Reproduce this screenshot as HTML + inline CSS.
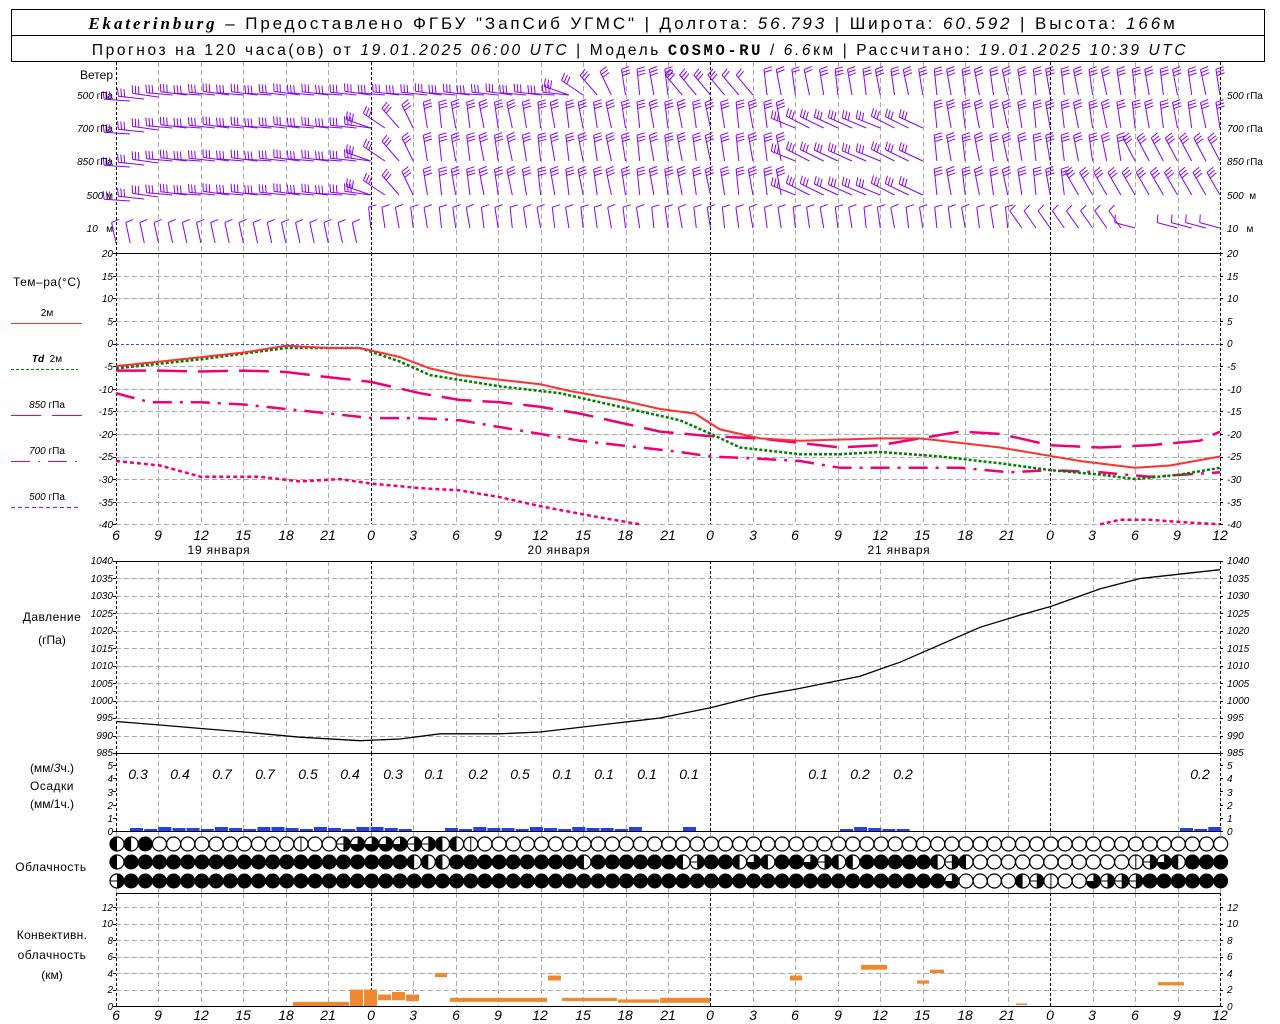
<!DOCTYPE html>
<html><head><meta charset="utf-8"><style>
html,body{margin:0;padding:0;background:#fff;width:1280px;height:1024px;overflow:hidden}
svg{display:block}
text{font-family:"Liberation Sans",sans-serif;fill:#000}
.it{font-style:italic}
.ax{font-family:"Liberation Sans",sans-serif;font-style:italic;font-size:10px}
.hl{font-family:"Liberation Sans",sans-serif;font-style:italic;font-size:14px}
.lb{font-size:12px}
</style></head><body>
<svg id="s" width="1280" height="1024" viewBox="0 0 1280 1024" xmlns="http://www.w3.org/2000/svg">
<rect x="11.5" y="9.5" width="1253" height="52" fill="none" stroke="#000"/>
<line x1="11" y1="35.5" x2="1265" y2="35.5" stroke="#000"/>
<text x="633" y="29" text-anchor="middle" font-size="17" letter-spacing="2.9"><tspan font-family="Liberation Serif" font-style="italic" font-weight="bold">Ekaterinburg</tspan> – Предоставлено ФГБУ "ЗапСиб УГМС" | Долгота: <tspan class="it">56.793</tspan> | Широта: <tspan class="it">60.592</tspan> | Высота: <tspan class="it">166</tspan>м</text>
<text x="640" y="55" text-anchor="middle" font-size="15.5" letter-spacing="2.6">Прогноз на 120 часа(ов) от <tspan class="it">19.01.2025 06:00 UTC</tspan> | Модель <tspan font-family="Liberation Mono" font-weight="bold">COSMO-RU</tspan> / <tspan class="it">6.6</tspan>км | Рассчитано: <tspan class="it">19.01.2025 10:39 UTC</tspan></text>
<g id="grid"></g>
<g id="wind" stroke="#8800ff" stroke-width="1" fill="none"></g>
<g id="curves" fill="none"></g>
<g id="bars"></g>
<g id="clouds"></g>
<g class="lb" text-anchor="end">
<text x="113" y="79">Ветер</text>
<text x="113" y="99" font-size="10"><tspan class="it">500</tspan> гПа</text>
<text x="113" y="132" font-size="10"><tspan class="it">700</tspan> гПа</text>
<text x="113" y="165" font-size="10"><tspan class="it">850</tspan> гПа</text>
<text x="113" y="199" font-size="10"><tspan class="it">500</tspan> м</text>
<text x="113" y="232" font-size="10"><tspan class="it">10</tspan> &#160;&#160;м</text>
</g>
<g class="lb">
<text x="1227" y="99" font-size="10"><tspan class="it">500</tspan> гПа</text>
<text x="1227" y="132" font-size="10"><tspan class="it">700</tspan> гПа</text>
<text x="1227" y="165" font-size="10"><tspan class="it">850</tspan> гПа</text>
<text x="1227" y="199" font-size="10"><tspan class="it">500</tspan> &#160;м</text>
<text x="1227" y="232" font-size="10"><tspan class="it">10</tspan> &#160;&#160;м</text>
</g>
<g class="lb" text-anchor="middle">
<text x="47" y="286" letter-spacing="0.5">Тем–ра(°C)</text>
<text x="47" y="316" font-size="10">2м</text>
<line x1="11" y1="323.5" x2="82" y2="323.5" stroke="#ff3030"/>
<text x="47" y="362" font-size="10"><tspan class="it" font-weight="bold">Td</tspan> &#160;2м</text>
<line x1="11" y1="369.5" x2="78" y2="369.5" stroke="#008000" stroke-dasharray="3,2"/>
<text x="47" y="408" font-size="10"><tspan class="it">850</tspan> гПа</text>
<line x1="11" y1="415.5" x2="82" y2="415.5" stroke="#ee0077" stroke-dasharray="30,11"/>
<text x="47" y="454" font-size="10"><tspan class="it">700</tspan> гПа</text>
<line x1="11" y1="461.5" x2="78" y2="461.5" stroke="#ee0077" stroke-dasharray="19,8,2,8"/>
<text x="47" y="500" font-size="10"><tspan class="it">500</tspan> гПа</text>
<line x1="11" y1="507.5" x2="78" y2="507.5" stroke="#ee0077" stroke-dasharray="4,3"/>
<text x="52" y="621" letter-spacing="0.5">Давление</text>
<text x="52" y="644">(гПа)</text>
<text x="52" y="772">(мм/<tspan class="it">3</tspan>ч.)</text>
<text x="52" y="790" letter-spacing="0.5">Осадки</text>
<text x="52" y="808">(мм/1ч.)</text>
<text x="51" y="871" letter-spacing="0.5">Облачность</text>
<text x="52" y="939" letter-spacing="0.3">Конвективн.</text>
<text x="52" y="959" letter-spacing="0.5">облачность</text>
<text x="52" y="979">(км)</text>
</g>
<g class="hl" text-anchor="middle" font-size="13">
<text x="138" y="779">0.3</text><text x="180" y="779">0.4</text><text x="222" y="779">0.7</text><text x="265" y="779">0.7</text><text x="308" y="779">0.5</text><text x="350" y="779">0.4</text><text x="393" y="779">0.3</text><text x="434" y="779">0.1</text><text x="478" y="779">0.2</text><text x="520" y="779">0.5</text><text x="562" y="779">0.1</text><text x="604" y="779">0.1</text><text x="647" y="779">0.1</text><text x="689" y="779">0.1</text><text x="818" y="779">0.1</text><text x="860" y="779">0.2</text><text x="903" y="779">0.2</text><text x="1200" y="779">0.2</text>
</g>
<g class="hl" text-anchor="middle" font-size="14">
<text x="116" y="540">6</text><text x="158" y="540">9</text><text x="201" y="540">12</text><text x="243" y="540">15</text><text x="286" y="540">18</text><text x="328" y="540">21</text><text x="371" y="540">0</text><text x="413" y="540">3</text><text x="456" y="540">6</text><text x="498" y="540">9</text><text x="540" y="540">12</text><text x="583" y="540">15</text><text x="625" y="540">18</text><text x="668" y="540">21</text><text x="710" y="540">0</text><text x="753" y="540">3</text><text x="795" y="540">6</text><text x="838" y="540">9</text><text x="880" y="540">12</text><text x="922" y="540">15</text><text x="965" y="540">18</text><text x="1007" y="540">21</text><text x="1050" y="540">0</text><text x="1092" y="540">3</text><text x="1135" y="540">6</text><text x="1177" y="540">9</text><text x="1220" y="540">12</text>
<text x="116" y="1020">6</text><text x="158" y="1020">9</text><text x="201" y="1020">12</text><text x="243" y="1020">15</text><text x="286" y="1020">18</text><text x="328" y="1020">21</text><text x="371" y="1020">0</text><text x="413" y="1020">3</text><text x="456" y="1020">6</text><text x="498" y="1020">9</text><text x="540" y="1020">12</text><text x="583" y="1020">15</text><text x="625" y="1020">18</text><text x="668" y="1020">21</text><text x="710" y="1020">0</text><text x="753" y="1020">3</text><text x="795" y="1020">6</text><text x="838" y="1020">9</text><text x="880" y="1020">12</text><text x="922" y="1020">15</text><text x="965" y="1020">18</text><text x="1007" y="1020">21</text><text x="1050" y="1020">0</text><text x="1092" y="1020">3</text><text x="1135" y="1020">6</text><text x="1177" y="1020">9</text><text x="1220" y="1020">12</text>
</g>
<g class="lb" text-anchor="middle" letter-spacing="0.8">
<text x="219" y="554">19 января</text><text x="559" y="554">20 января</text><text x="899" y="554">21 января</text>
</g>
<g class="ax" text-anchor="end">
<text x="113" y="257">20</text><text x="113" y="280">15</text><text x="113" y="302">10</text><text x="113" y="325">5</text><text x="113" y="347">0</text><text x="113" y="370">-5</text><text x="113" y="393">-10</text><text x="113" y="415">-15</text><text x="113" y="438">-20</text><text x="113" y="460">-25</text><text x="113" y="483">-30</text><text x="113" y="506">-35</text><text x="113" y="528">-40</text>
<text x="113" y="564">1040</text><text x="113" y="582">1035</text><text x="113" y="599">1030</text><text x="113" y="617">1025</text><text x="113" y="634">1020</text><text x="113" y="652">1015</text><text x="113" y="669">1010</text><text x="113" y="687">1005</text><text x="113" y="704">1000</text><text x="113" y="721">995</text><text x="113" y="739">990</text><text x="113" y="756">985</text>
<text x="113" y="769">5</text><text x="113" y="782">4</text><text x="113" y="796">3</text><text x="113" y="809">2</text><text x="113" y="822">1</text><text x="113" y="835">0</text>
<text x="113" y="911">12</text><text x="113" y="927">10</text><text x="113" y="944">8</text><text x="113" y="960">6</text><text x="113" y="977">4</text><text x="113" y="993">2</text><text x="113" y="1010">0</text>
</g>
<g class="ax">
<text x="1227" y="257">20</text><text x="1227" y="280">15</text><text x="1227" y="302">10</text><text x="1227" y="325">5</text><text x="1227" y="347">0</text><text x="1227" y="370">-5</text><text x="1227" y="393">-10</text><text x="1227" y="415">-15</text><text x="1227" y="438">-20</text><text x="1227" y="460">-25</text><text x="1227" y="483">-30</text><text x="1227" y="506">-35</text><text x="1227" y="528">-40</text>
<text x="1227" y="564">1040</text><text x="1227" y="582">1035</text><text x="1227" y="599">1030</text><text x="1227" y="617">1025</text><text x="1227" y="634">1020</text><text x="1227" y="652">1015</text><text x="1227" y="669">1010</text><text x="1227" y="687">1005</text><text x="1227" y="704">1000</text><text x="1227" y="721">995</text><text x="1227" y="739">990</text><text x="1227" y="756">985</text>
<text x="1227" y="769">5</text><text x="1227" y="782">4</text><text x="1227" y="796">3</text><text x="1227" y="809">2</text><text x="1227" y="822">1</text><text x="1227" y="835">0</text>
<text x="1227" y="911">12</text><text x="1227" y="927">10</text><text x="1227" y="944">8</text><text x="1227" y="960">6</text><text x="1227" y="977">4</text><text x="1227" y="993">2</text><text x="1227" y="1010">0</text>
</g>
</svg>
<script>
var NS="http://www.w3.org/2000/svg";
function el(p,t,a){var e=document.createElementNS(NS,t);for(var k in a)e.setAttribute(k,a[k]);p.appendChild(e);return e;}
var G=document.getElementById('grid'),W=document.getElementById('wind'),C=document.getElementById('curves'),B=document.getElementById('bars'),CL=document.getElementById('clouds');
var X0=116,DX=14.154;
function xh(h){return X0+h*DX;}
var spans=[[62,253],[253,524],[561,753],[753,831],[893,1006]];
for(var k=0;k<=26;k++){var x=Math.round(xh(k*3))+0.5;var day=(k==0||k==6||k==14||k==22||k==26);
 spans.forEach(function(s){el(G,'line',{x1:x,y1:s[0],x2:x,y2:s[1],stroke:day?'#000':'#aaa','stroke-dasharray':day?'3,2':'5,3'});});
 el(G,'line',{x1:x,y1:831,x2:x,y2:836,stroke:'#aaa'});el(G,'line',{x1:x,y1:888,x2:x,y2:893,stroke:'#aaa'});
}
for(var t=15;t>=-40;t-=5){var y=Math.round(343.5-t*4.52)+0.5;el(G,'line',{x1:116,y1:y,x2:1220,y2:y,stroke:t==0?'#3050ff':'#aaa','stroke-dasharray':t==0?'3,2':'5,3'});}
for(var p=1035;p>985;p-=5){var y=Math.round(561+(1040-p)*3.49)+0.5;el(G,'line',{x1:116,y1:y,x2:1220,y2:y,stroke:'#aaa','stroke-dasharray':'5,3'});}
for(var c=2;c<=12;c+=2){var y=Math.round(1006-c*8.25)+0.5;el(G,'line',{x1:116,y1:y,x2:1220,y2:y,stroke:'#aaa','stroke-dasharray':'5,3'});}
[253.5,561.5,753.5,831.5,893.5,1006.5].forEach(function(y){el(G,'line',{x1:116,y1:y,x2:1220,y2:y,stroke:'#000'});});
function ticks(vals){vals.forEach(function(y){y=Math.round(y)+0.5;el(G,'line',{x1:113,y1:y,x2:116,y2:y,stroke:'#000'});el(G,'line',{x1:1220,y1:y,x2:1223,y2:y,stroke:'#000'});});}
var tv=[];for(var t=20;t>=-40;t-=5)tv.push(343.5-t*4.52);ticks(tv);
tv=[];for(var p=1040;p>=985;p-=5)tv.push(561+(1040-p)*3.49);ticks(tv);
tv=[];for(var m=0;m<=5;m++)tv.push(831-m*13.2);ticks(tv);
tv=[];for(var c=0;c<=12;c+=2)tv.push(1006-c*8.25);ticks(tv);
function theta(r,i){
 if(r<4){
  var lim=(r==0)?32:18;
  if(i<lim)return -86+((i*7)%5);
  if(i<lim+4)return -86+(i-lim+1)*15;
  if(r==0&&i>=40&&i<46)return -40;
  if(r>0&&i>=48&&i<58)return -68+((i*5)%6);
  if(r==3&&i>=68)return -30;
  if(r==2&&i>=72)return -28;
  return -12+((i*3)%7);
 } else {
  if(i<18)return -12;
  if(i>=72)return -75;
  if(i>=64)return -35;
  return -10+((i*3)%5);
 }
}
var rowsY=[95,128,161,195,228];
for(var r=0;r<5;r++)for(var i=0;i<=78;i++){
 if(r==4&&i>72&&i<75)continue;
 var lim=(r==0)?32:18;
 var th=theta(r,i)*Math.PI/180;var L=(r==4)?21:26;
 var sx=Math.sin(th),sy=-Math.cos(th);
 var bx=xh(i)+ (r<4&&i<lim?14:0),by=rowsY[r]+(r==4&&i<18?15:0)-(r<4&&i<3?(3-i)*-2:0);
 var tx=bx+sx*L,ty=by+sy*L;
 var d='M'+bx.toFixed(1)+' '+by.toFixed(1)+'L'+tx.toFixed(1)+' '+ty.toFixed(1);
 var nf=(r==4)?1:(r==0&&i>=44&&i<50?2:3);
 var fx=-sy,fy=sx;
 for(var f=0;f<nf;f++){var px=tx-sx*f*3.2,py=ty-sy*f*3.2;d+='M'+px.toFixed(1)+' '+py.toFixed(1)+'l'+(fx*8+sx*1.5).toFixed(1)+' '+(fy*8+sy*1.5).toFixed(1);}
 el(W,'path',{d:d});
}
function yT(t){return 343.5-t*4.52;}
function line(pts,col,dash,w){var d='';pts.forEach(function(p,k){d+=(k?'L':'M')+p[0]+' '+yT(p[1]).toFixed(1);});el(C,'path',{d:d,stroke:col,'stroke-width':w||2,'stroke-dasharray':dash||'none'});}
line([[116,-6],[160,-6],[201,-6.2],[244,-6],[286,-6.3],[330,-7.5],[371,-8.5],[420,-11],[460,-12.5],[500,-13],[540,-14],[580,-15.5],[620,-17.5],[660,-19.5],[711,-20.5],[760,-21],[800,-22],[840,-23],[880,-22.5],[920,-21],[960,-19.5],[1000,-20],[1050,-22.5],[1100,-23],[1150,-22.5],[1200,-21.5],[1220,-19.5]],'#ee0077','30,11',2.5);
line([[116,-11],[150,-13],[201,-13],[244,-13.5],[286,-14.5],[330,-15.5],[371,-16.5],[420,-16.5],[460,-17],[500,-18.5],[540,-20],[580,-21.5],[620,-22.5],[680,-24],[711,-25],[760,-25.5],[800,-26],[840,-27.5],[880,-27.5],[960,-27.5],[1010,-28.5],[1050,-28],[1100,-28.5],[1150,-29.5],[1220,-28.5]],'#ee0077','19,8,3,8',2.5);
line([[116,-26],[160,-27],[201,-29.5],[260,-29.5],[300,-30.5],[340,-30],[371,-31],[420,-32],[460,-32.5],[500,-34],[540,-36],[600,-38.5],[640,-40]],'#ee0077','4,3',2.5);
line([[1100,-40],[1120,-39],[1150,-39],[1180,-39.5],[1220,-40]],'#ee0077','4,3',2.5);
line([[116,-5.5],[201,-3.5],[286,-1],[360,-1],[400,-4],[430,-7],[500,-9.5],[560,-11],[620,-14],[680,-17],[711,-20],[740,-23],[800,-24.5],[840,-24.5],[880,-24],[940,-25],[1000,-26.5],[1050,-28],[1100,-29],[1135,-30],[1180,-29],[1220,-27.5]],'#008000','3,2',2.5);
line([[116,-5],[160,-4],[201,-3],[244,-2],[286,-0.5],[330,-1],[360,-1],[400,-3],[430,-5.5],[460,-7],[500,-8],[540,-9],[570,-10.5],[620,-12.5],[660,-14.5],[695,-15.5],[720,-19],[760,-21],[800,-21.5],[880,-21],[920,-21],[960,-22],[1000,-23],[1040,-24.5],[1080,-26],[1135,-27.5],[1170,-27],[1220,-25]],'#ff3030','none',2);
var pp=[[116,994],[160,993],[201,992],[244,991],[300,989.5],[360,988.5],[400,989],[440,990.5],[500,990.5],[540,991],[600,993],[660,995],[711,998],[760,1001.5],[800,1003.5],[860,1007],[900,1011],[940,1016],[980,1021],[1020,1024.5],[1051,1027],[1100,1032],[1140,1035],[1220,1037.5]];
var d='';pp.forEach(function(p,k){d+=(k?'L':'M')+p[0]+' '+(561+(1040-p[1])*3.49).toFixed(1);});el(C,'path',{d:d,stroke:'#000','stroke-width':1.3});
var pr=[[130,410],[445,640],[683,697],[840,907],[1180,1220]];
pr.forEach(function(s){for(var x=s[0];x<s[1];x+=14.15){var h=2+((Math.round(x)*7)%3);el(B,'rect',{x:x.toFixed(1),y:831-h,width:13,height:h,fill:'#2040e8'});}});
[[293,350,0,0.5],[350,364,0,2],[364,378,0,2],[378,392,0.7,1.4],[392,406,0.7,1.7],[406,420,0.6,1.4],[435,448,3.5,4],[450,548,0.5,1],[548,562,3.1,3.7],[562,618,0.6,1],[618,660,0.4,0.8],[660,711,0.4,1],[790,803,3.1,3.7],[861,888,4.4,5],[917,930,2.7,3.1],[930,945,4,4.4],[1016,1028,0.1,0.3],[1158,1185,2.5,2.9]].forEach(function(b){
 el(B,'rect',{x:b[0],y:(1006-b[3]*8.25).toFixed(1),width:b[1]-b[0]-1,height:((b[3]-b[2])*8.25).toFixed(1),fill:'#f08830'});});
function row(spec){var a=[];spec.forEach(function(s){for(var k=0;k<s[1];k++)a.push(s[0]);});return a;}
var R1=row([['H',2],['F',1],['E',10],['V',1],['E',2],['T',1],['Q',4],['T',2],['H',2],['V',1],['E',53]]);
var R2=row([['H',1],['F',20],['H',3],['F',9],['H',1],['F',6],['H',1],['T',1],['F',2],['H',1],['Q',1],['H',1],['F',2],['Q',1],['T',1],['H',2],['F',5],['H',1],['T',1],['H',1],['E',11],['V',1],['T',1],['Q',1],['H',1],['F',3]]);
var R3=row([['T',1],['F',58],['Q',1],['E',4],['H',1],['T',1],['V',1],['E',2],['Q',1],['T',3],['F',6]]);
var rys=[844,862,881];
[R1,R2,R3].forEach(function(R,ri){var cy=rys[ri];for(var i=0;i<=78;i++){var t=R[i]||'F';var cx=117+i*14.15;var r=7;
 if(t=='F'){el(CL,'circle',{cx:cx,cy:cy,r:r+0.5,fill:'#000'});continue;}
 el(CL,'circle',{cx:cx,cy:cy,r:r,fill:'#fff',stroke:'#000','stroke-width':1.2});
 if(t=='H')el(CL,'path',{d:'M'+cx+' '+(cy-r)+'A'+r+' '+r+' 0 0 0 '+cx+' '+(cy+r)+'Z',fill:'#000'});
 if(t=='Q')el(CL,'path',{d:'M'+cx+' '+cy+'L'+cx+' '+(cy-r)+'A'+r+' '+r+' 0 1 1 '+(cx-r)+' '+cy+'Z',fill:'#000'});
 if(t=='V')el(CL,'line',{x1:cx,y1:cy-r,x2:cx,y2:cy+r,stroke:'#000'});
 if(t=='T'){el(CL,'path',{d:'M'+cx+' '+(cy-r)+'A'+r+' '+r+' 0 0 1 '+cx+' '+(cy+r)+'Z',fill:'#000'});el(CL,'line',{x1:cx-r,y1:cy,x2:cx,y2:cy,stroke:'#000'});}
}});
</script>
</body></html>
